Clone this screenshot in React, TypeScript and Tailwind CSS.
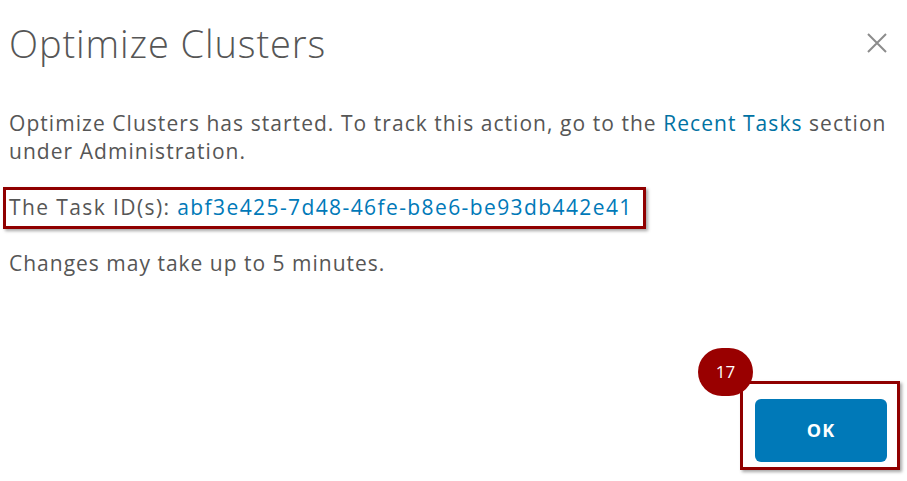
import React from 'react';

const font = { fontFamily: '"Open Sans", Lato, "Liberation Sans", sans-serif' };

export default function App() {
  return (
    <div className="flex flex-col w-[907px] h-[481px] bg-white overflow-hidden text-[#565656]" style={font}>
      {/* Header */}
      <div className="flex items-center justify-between pl-[9px] pr-[19px] pt-[21px]">
        <h1 className="text-[38px] leading-[44px] font-light tracking-[0.9px] text-[#565656]">Optimize Clusters</h1>
        <button className="w-[22px] h-[22px] flex items-center justify-center text-[#8c8c8c]">
          <svg width="22" height="22" viewBox="0 0 22 22" fill="none" stroke="currentColor" strokeWidth="2">
            <path d="M2 2 L20 20 M20 2 L2 20" />
          </svg>
        </button>
      </div>

      {/* Body */}
      <div className="flex flex-col items-start px-[9px] pt-[44px] text-[21px] leading-[28px]">
        <p className="max-w-[885px] tracking-[1.05px]">
          Optimize Clusters has started. To track this action, go to the{' '}
          <a className="text-[#0072a3]">Recent Tasks</a> section under Administration.
        </p>
        <div className="mt-[22px] -ml-[6px] border-[3px] border-[#900000] pl-[3px] pr-[10px] pt-[3px] pb-[5px] tracking-[1.4px] shadow-[2px_2px_3px_rgba(0,0,0,0.35)]">
          The Task ID(s): <a className="text-[#0079b8]">abf3e425-7d48-46fe-b8e6-be93db442e41</a>
        </div>
        <p className="mt-[20px] tracking-[1px]">Changes may take up to 5 minutes.</p>
      </div>

      {/* Footer */}
      <div className="mt-auto flex justify-end pr-[7px] pb-[11px]">
        <div className="relative border-[3px] border-[#900000] pl-[12px] pr-[10px] pt-[15px] pb-[5px] shadow-[2px_2px_3px_rgba(0,0,0,0.35)]">
          <button className="w-[132px] h-[63px] rounded-[6px] bg-[#0079b8] text-white text-[18px] font-bold tracking-[1px]">
            OK
          </button>
          {/* Step badge */}
          <div className="absolute -left-[45px] -top-[36px] w-[55px] h-[48px] rounded-full bg-[#990000] flex items-center justify-center text-white text-[17px]">
            17
          </div>
        </div>
      </div>
    </div>
  );
}
